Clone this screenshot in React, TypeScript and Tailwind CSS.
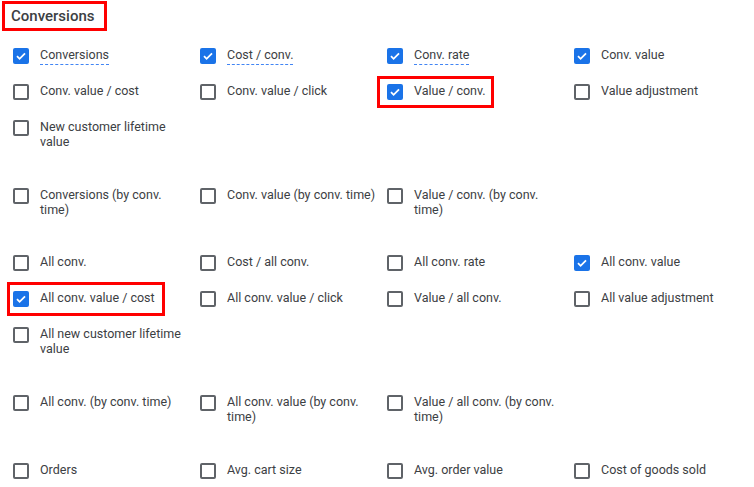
import React from "react";

type Item = {
  label: string;
  checked?: boolean;
  dashed?: boolean;
  marked?: "value" | "cost";
};

const groups: Item[][] = [
  [
    { label: "Conversions", checked: true, dashed: true },
    { label: "Cost / conv.", checked: true, dashed: true },
    { label: "Conv. rate", checked: true, dashed: true },
    { label: "Conv. value", checked: true },
    { label: "Conv. value / cost" },
    { label: "Conv. value / click" },
    { label: "Value / conv.", checked: true, marked: "value" },
    { label: "Value adjustment" },
    { label: "New customer lifetime value" },
  ],
  [
    { label: "Conversions (by conv. time)" },
    { label: "Conv. value (by conv. time)" },
    { label: "Value / conv. (by conv. time)" },
  ],
  [
    { label: "All conv." },
    { label: "Cost / all conv." },
    { label: "All conv. rate" },
    { label: "All conv. value", checked: true },
    { label: "All conv. value / cost", checked: true, marked: "cost" },
    { label: "All conv. value / click" },
    { label: "Value / all conv." },
    { label: "All value adjustment" },
    { label: "All new customer lifetime value" },
  ],
  [
    { label: "All conv. (by conv. time)" },
    { label: "All conv. value (by conv. time)" },
    { label: "Value / all conv. (by conv. time)" },
  ],
  [
    { label: "Orders" },
    { label: "Avg. cart size" },
    { label: "Avg. order value" },
    { label: "Cost of goods sold" },
  ],
];

const Checkbox: React.FC<{ checked?: boolean }> = ({ checked }) =>
  checked ? (
    <span className="mt-[1px] -mb-[2px] flex h-4 w-4 shrink-0 items-center justify-center rounded-[2px] bg-[#1a73e8]">
      <svg width="12" height="12" viewBox="0 0 12 12" fill="none">
        <path d="M2 6.2l2.6 2.6L10 3.4" stroke="white" strokeWidth="1.8" />
      </svg>
    </span>
  ) : (
    <span className="mt-[1px] -mb-[2px] h-4 w-4 shrink-0 rounded-[2px] border-2 border-[#5f6368]" />
  );

const ColumnOption: React.FC<{ item: Item }> = ({ item }) => (
  <div className="relative flex items-start gap-[11px]">
    <Checkbox checked={item.checked} />
    <span className="w-[152px] text-[12.5px] leading-[15px]">
      {item.dashed ? (
        <span className="border-b border-dashed border-[#4285f4] pb-[2px]">{item.label}</span>
      ) : (
        item.label
      )}
    </span>
    {/* red highlight boxes from the screenshot */}
    {item.marked === "value" && (
      <span className="absolute left-[-10px] top-[-7px] h-[32px] w-[117px] border-[3px] border-[#f00]" />
    )}
    {item.marked === "cost" && (
      <span className="absolute left-[-6px] top-[-8px] h-[34px] w-[158px] border-[3px] border-[#f00]" />
    )}
  </div>
);

export default function App() {
  return (
    <div className="h-[487px] w-[754px] overflow-hidden bg-white font-['Roboto',sans-serif] text-[#3c4043]">
      <div className="pl-[2px] pt-[1px]">
        <span className="inline-block border-[3px] border-[#f00] py-[3px] pl-[6px] pr-[10px] text-[15px] font-medium leading-[18px]">
          Conversions
        </span>
      </div>
      <div className="mt-[16px] flex flex-col gap-[38px] pl-[13px]">
        {groups.map((group, gi) => (
          <div
            key={gi}
            className={`grid grid-cols-[repeat(4,187px)] gap-y-[21px] ${gi === 1 ? "-mb-[1px]" : ""}`}
          >
            {group.map((item) => (
              <ColumnOption key={item.label} item={item} />
            ))}
          </div>
        ))}
      </div>
    </div>
  );
}
